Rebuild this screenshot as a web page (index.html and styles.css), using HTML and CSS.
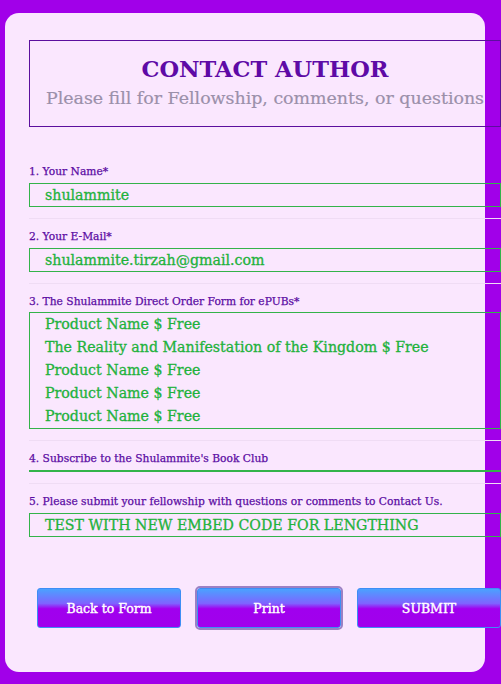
FILE: index.html
```html
<!DOCTYPE html>
<html lang="en">
<head>
<meta charset="utf-8">
<title>Contact Author</title>
<link rel="stylesheet" href="styles.css">
</head>
<body>
<div class="card">
  <div class="form">
    <div class="header">
      <h1 class="title">CONTACT AUTHOR</h1>
      <p class="subtitle">Please fill for Fellowship, comments, or questions</p>
    </div>
    <div class="fields">
      <div class="field">
        <label class="label">1. Your Name*</label>
        <div class="input">shulammite</div>
      </div>
      <div class="field">
        <label class="label">2. Your E-Mail*</label>
        <div class="input">shulammite.tirzah@gmail.com</div>
      </div>
      <div class="field">
        <label class="label">3. The Shulammite Direct Order Form for ePUBs*</label>
        <div class="input list">
          <div>Product Name $ Free</div>
          <div>The Reality and Manifestation of the Kingdom $ Free</div>
          <div>Product Name $ Free</div>
          <div>Product Name $ Free</div>
          <div>Product Name $ Free</div>
        </div>
      </div>
      <div class="field">
        <label class="label">4. Subscribe to the Shulammite's Book Club</label>
        <div class="underline"></div>
      </div>
      <div class="field last">
        <label class="label">5. Please submit your fellowship with questions or comments to Contact Us.</label>
        <div class="input">TEST WITH NEW EMBED CODE FOR LENGTHING</div>
      </div>
    </div>
    <div class="buttons">
      <button class="btn">Back to Form</button>
      <button class="btn focused">Print</button>
      <button class="btn">SUBMIT</button>
    </div>
  </div>
</div>
</body>
</html>
```
FILE: styles.css
```css
html, body {
  margin: 0;
  padding: 0;
}
body {
  background: #a100e9;
  padding: 13px 0 0 5px;
  height: 684px;
  box-sizing: border-box;
  overflow: hidden;
  font-family: "DejaVu Serif", "Liberation Serif", serif;
}
.card {
  width: 480px;
  height: 659px;
  background: #fae7fe;
  border-radius: 14px;
  padding: 27px 0 0 24px;
  box-sizing: border-box;
}
.form {
  width: 472px;
}
.header {
  border: 1px solid #5b0f9e;
  height: 85px;
  text-align: center;
  box-sizing: content-box;
}
.title {
  margin: 13px 0 0;
  font-size: 22.5px;
  line-height: 30px;
  font-weight: bold;
  color: #5e0aa6;
}
.subtitle {
  margin: 0;
  font-size: 17.4px;
  line-height: 28px;
  color: #9b90aa;
  -webkit-text-stroke: 0.2px #9b90aa;
}
.fields {
  margin-top: 27px;
}
.field {
  padding: 10px 0 11px;
  border-bottom: 1px solid #efdcf4;
}
.field.last {
  border-bottom: none;
}
.label {
  display: block;
  font-size: 10.7px;
  line-height: 16px;
  color: #5b0ca3;
  margin-bottom: 3px;
  -webkit-text-stroke: 0.25px #5b0ca3;
}
.input {
  border: 1px solid #33b34a;
  height: 22px;
  line-height: 22px;
  padding-left: 15px;
  font-size: 14.2px;
  color: #1fb23c;
  white-space: nowrap;
  -webkit-text-stroke: 0.3px #1fb23c;
}
.input.list {
  height: auto;
  line-height: 23px;
  margin-top: -1px;
}
.underline {
  border-bottom: 2px solid #33b34a;
  height: 0;
  margin-top: 2px;
}
.buttons {
  display: flex;
  gap: 16px;
  padding-left: 8px;
  margin-top: 40px;
}
.btn {
  width: 144px;
  height: 40px;
  border: 1px solid #3d8ef5;
  border-radius: 3px;
  background: linear-gradient(#4aa2ff 0%, #7f63ff 38%, #a000ee 52%, #a100ec 100%);
  color: #ffffff;
  font-family: "DejaVu Serif", "Liberation Serif", serif;
  font-size: 12.5px;
  font-weight: normal;
  -webkit-text-stroke: 0.4px #ffffff;
  padding: 0;
}
.btn.focused {
  outline: 2px solid #9c80c4;
  outline-offset: 0;
}
```
